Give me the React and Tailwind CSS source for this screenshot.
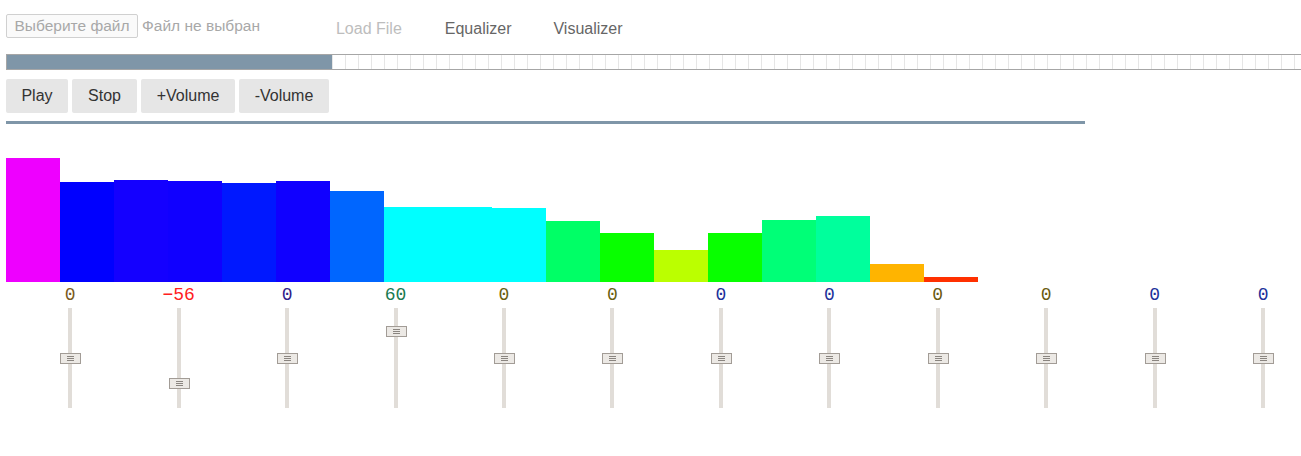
import React from "react";

const bars = [
  { h: 124, c: "#ee00ff" },
  { h: 100, c: "#0000ff" },
  { h: 102, c: "#1400ff" },
  { h: 101, c: "#1000ff" },
  { h: 99, c: "#0018ff" },
  { h: 101, c: "#1000ff" },
  { h: 91, c: "#0066ff" },
  { h: 75, c: "#00ffff" },
  { h: 75, c: "#00ffff" },
  { h: 74, c: "#00ffff" },
  { h: 61, c: "#00ff66" },
  { h: 49, c: "#08ff00" },
  { h: 32, c: "#bbff00" },
  { h: 49, c: "#08ff00" },
  { h: 62, c: "#00ff77" },
  { h: 66, c: "#00ff9c" },
  { h: 18, c: "#ffb400" },
  { h: 5, c: "#ff3000" },
];

const bands = [
  { v: 0, c: "#7a5a20" },
  { v: -56, c: "#ff2020" },
  { v: 0, c: "#30208a" },
  { v: 60, c: "#1a7a50" },
  { v: 0, c: "#6a6010" },
  { v: 0, c: "#6a6010" },
  { v: 0, c: "#20309a" },
  { v: 0, c: "#20309a" },
  { v: 0, c: "#6a5a10" },
  { v: 0, c: "#6a5a10" },
  { v: 0, c: "#20309a" },
  { v: 0, c: "#20309a" },
];

function Slider({ value }) {
  const top = 50 - 5 - value * 0.45;
  return (
    <div className="relative h-[100px] w-[20px] flex justify-center">
      <div className="w-[4px] h-full bg-[#e1ddd8]" />
      <div
        className="absolute left-0 w-[21px] h-[11px] border border-[#a29c96] bg-[#ece9e5] flex flex-col items-center justify-center gap-[1px]"
        style={{ top: `${top}px` }}
      >
        <div className="w-[7px] h-px bg-[#8a8580]" />
        <div className="w-[7px] h-px bg-[#8a8580]" />
        <div className="w-[7px] h-px bg-[#8a8580]" />
      </div>
    </div>
  );
}

export default function App() {
  const cells = Array.from({ length: 100 }, (_, i) => i);
  return (
    <div className="w-[1301px] h-[456px] overflow-hidden bg-white font-['Liberation_Sans',Arial,sans-serif]">
      {/* header */}
      <div className="flex items-center h-[54px] pl-[6px] pt-[4px]">
        <div className="flex items-center self-start mt-[10px]">
          <div className="h-[24px] w-[132px] border border-[#d0d0d0] rounded-[2px] bg-[#fafafa] flex items-center justify-center text-[15.5px] text-[#a8a8a8]">
            Выберите файл
          </div>
          <span className="ml-[4px] text-[15.5px] text-[#a8a8a8]">Файл не выбран</span>
        </div>
        <span className="ml-[76px] text-[16px] text-[#bdbdbd]">Load File</span>
        <span className="ml-[43px] text-[16px] text-[#666]">Equalizer</span>
        <span className="ml-[42px] text-[16px] text-[#666]">Visualizer</span>
      </div>

      {/* progress */}
      <div className="ml-[6px] h-[16px] border-y border-l border-[#a6a6a6] flex w-[1310px]">
        {cells.map((i) =>
          i < 25 ? (
            <div key={i} className="w-[13px] shrink-0 h-full bg-[#7f96a8]" />
          ) : (
            <div key={i} className="w-[13px] shrink-0 h-full border-l border-[#e6e6e6]" />
          )
        )}
      </div>

      {/* buttons */}
      <div className="flex gap-[4px] ml-[6px] mt-[9px]">
        {[
          ["Play", "w-[62px]"],
          ["Stop", "w-[65px]"],
          ["+Volume", "w-[94px]"],
          ["-Volume", "w-[90px]"],
        ].map(([t, w]) => (
          <div
            key={t}
            className={`${w} h-[34px] rounded-[2px] bg-[#e6e6e6] flex items-center justify-center text-[16px] text-[#333]`}
          >
            {t}
          </div>
        ))}
      </div>

      <div className="ml-[6px] mt-[8px] w-[1079px] h-[3px] bg-[#7f96a8]" />

      {/* spectrum */}
      <div className="flex items-end h-[158px] pl-[6px]">
        {bars.map((b, i) => (
          <div key={i} className="w-[54px] shrink-0" style={{ height: `${b.h}px`, backgroundColor: b.c }} />
        ))}
      </div>

      {/* equalizer */}
      <div className="flex pl-[16px] overflow-hidden">
        {bands.map((b, i) => (
          <div key={i} className="w-[108.45px] shrink-0 flex flex-col items-center">
            <div
              className="h-[26px] flex items-center text-[18px] font-['Liberation_Mono',monospace] leading-none"
              style={{ color: b.c }}
            >
              {b.v < 0 ? `\u2212${Math.abs(b.v)}` : b.v}
            </div>
            <Slider value={b.v} />
          </div>
        ))}
      </div>
    </div>
  );
}
